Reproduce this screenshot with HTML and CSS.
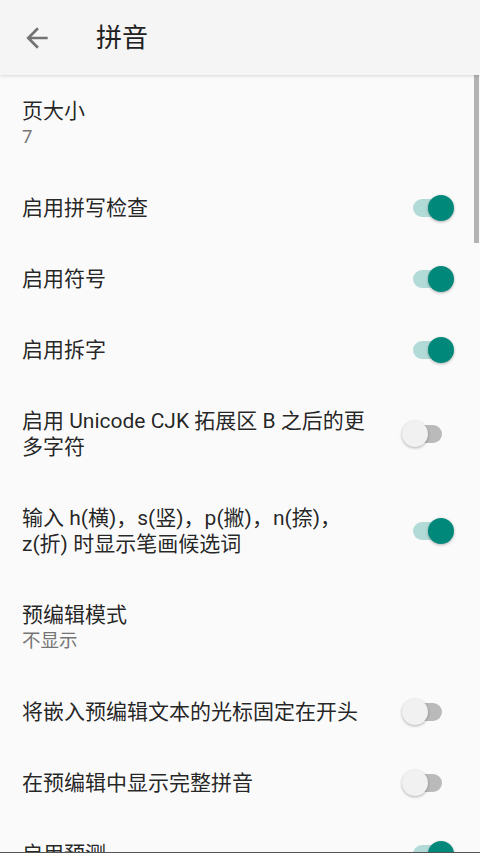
FILE: index.html
```html
<!DOCTYPE html>
<html lang="zh-CN">
<head>
<meta charset="utf-8">
<title>拼音</title>
<link rel="stylesheet" href="styles.css">
</head>
<body>
<div class="screen">
  <header class="toolbar">
    <svg class="back" viewBox="0 0 24 24" width="32" height="32"><path d="M20 11H7.83l5.59-5.59L12 4l-8 8 8 8 1.41-1.41L7.83 13H20v-2z" fill="currentColor"/></svg>
    <h1 class="title">拼音</h1>
  </header>
  <main class="list">
    <div class="item">
      <div class="text"><div class="t">页大小</div><div class="s">7</div></div>
    </div>
    <div class="item">
      <div class="text"><div class="t">启用拼写检查</div></div>
      <div class="widget"><span class="switch on"><span class="thumb"></span></span></div>
    </div>
    <div class="item">
      <div class="text"><div class="t">启用符号</div></div>
      <div class="widget"><span class="switch on"><span class="thumb"></span></span></div>
    </div>
    <div class="item">
      <div class="text"><div class="t">启用拆字</div></div>
      <div class="widget"><span class="switch on"><span class="thumb"></span></span></div>
    </div>
    <div class="item">
      <div class="text"><div class="t">启用 Unicode CJK 拓展区 B 之后的更多字符</div></div>
      <div class="widget"><span class="switch"><span class="thumb"></span></span></div>
    </div>
    <div class="item">
      <div class="text"><div class="t">输入 h(横)，s(竖)，p(撇)，n(捺)，z(折) 时显示笔画候选词</div></div>
      <div class="widget"><span class="switch on"><span class="thumb"></span></span></div>
    </div>
    <div class="item">
      <div class="text"><div class="t">预编辑模式</div><div class="s">不显示</div></div>
    </div>
    <div class="item">
      <div class="text"><div class="t">将嵌入预编辑文本的光标固定在开头</div></div>
      <div class="widget"><span class="switch"><span class="thumb"></span></span></div>
    </div>
    <div class="item">
      <div class="text"><div class="t">在预编辑中显示完整拼音</div></div>
      <div class="widget"><span class="switch"><span class="thumb"></span></span></div>
    </div>
    <div class="item">
      <div class="text"><div class="t">启用预测</div></div>
      <div class="widget"><span class="switch on"><span class="thumb"></span></span></div>
    </div>
  </main>
  <div class="scrollbar"></div>
  <div class="bottom-edge"></div>
</div>
</body>
</html>
```

FILE: styles.css
```css
html, body {
  margin: 0;
  padding: 0;
  background: #fafafa;
}
body {
  font-family: Roboto, "Noto Sans CJK SC", sans-serif;
  color: rgba(0, 0, 0, 0.87);
}
.screen {
  position: relative;
  width: 480px;
  height: 853px;
  overflow: hidden;
  background: #fafafa;
}
.toolbar {
  position: relative;
  z-index: 2;
  height: 75px;
  display: flex;
  align-items: center;
  background: #f5f5f5;
  box-shadow: 0 1px 3px rgba(0, 0, 0, 0.14);
}
.back {
  margin-left: 21px;
  color: #737373;
  flex: none;
}
.title {
  margin: 0 0 0 43px;
  font-size: 26px;
  font-weight: 400;
  line-height: 32px;
  color: #212121;
}
.list {
  display: flex;
  flex-direction: column;
}
.item {
  display: flex;
  align-items: center;
  padding: 22.5px 0 22.5px 22px;
}
.text {
  flex: 1;
  padding-right: 107px;
}
.item .widget + .text,
.item .text:not(:last-child) {
  padding-right: 0;
}
.text:not(:last-child) {
  width: 351px;
  flex: none;
}
.t {
  font-size: 21px;
  line-height: 26px;
}
.s {
  font-size: 18.5px;
  line-height: 26px;
  color: #757575;
}
.widget {
  flex: none;
  width: 107px;
  display: flex;
  align-items: center;
  padding-left: 40px;
  box-sizing: border-box;
}
.switch {
  position: relative;
  display: block;
  width: 29px;
  height: 18px;
  border-radius: 9px;
  background: #bababa;
}
.switch .thumb {
  position: absolute;
  top: -4px;
  left: -11px;
  width: 26px;
  height: 26px;
  border-radius: 50%;
  background: #f1f1f1;
  box-shadow: 0 1px 3px rgba(0, 0, 0, 0.3);
}
.switch.on {
  background: #b2dbd7;
}
.switch.on .thumb {
  left: 15px;
  background: #00897b;
}
.scrollbar {
  position: absolute;
  top: 75px;
  right: 1px;
  width: 5px;
  height: 168px;
  background: #b3b3b3;
}
.bottom-edge {
  position: absolute;
  left: 0;
  right: 0;
  bottom: 0;
  height: 1px;
  background: #555;
}
```
